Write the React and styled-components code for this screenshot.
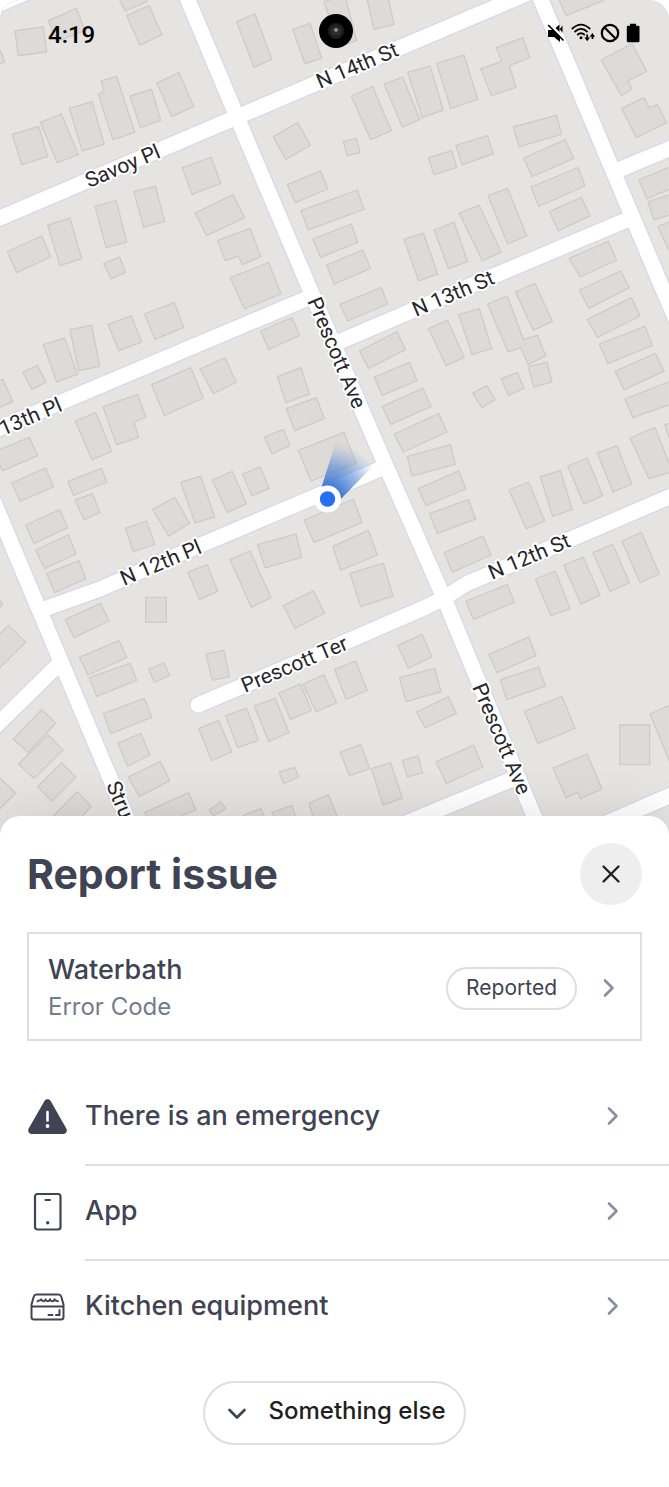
import React from "react";
import styled, { createGlobalStyle } from "styled-components";

const GlobalStyle = createGlobalStyle`
  *, *::before, *::after { box-sizing: border-box; }
  html, body { margin: 0; background: #fff; }
  body { font-family: Inter, "Liberation Sans", sans-serif; color: #404353; }
  button { font: inherit; color: inherit; cursor: pointer; }
`;

const Screen = styled.main`
  position: relative;
  display: flex;
  flex-direction: column;
  min-height: 100vh;
  background: #fff;
`;

const StatusBar = styled.header`
  position: absolute;
  inset: 0 0 auto;
  z-index: 1;
  display: grid;
  grid-template-columns: 1fr auto 1fr;
  align-items: center;
  padding: 13px 28px 0;
  font-family: Roboto, "Liberation Sans", sans-serif;
  color: #000;
`;

const Clock = styled.time`
  padding: 8px 0 0 20px;
  font-size: 24px;
  line-height: 28px;
  font-weight: 500;
`;

const Camera = styled.svg`
  width: 36px;
  height: 36px;
`;

const StatusIcons = styled.div`
  display: flex;
  justify-content: flex-end;
  align-items: center;
  gap: 5px;
  padding-top: 4px;
  svg { display: block; }
`;

const MapView = styled.section`
  overflow: hidden;
  border-radius: 20px 20px 0 0;
  background: #e5e4e0;
  svg { display: block; width: 100%; height: auto; }
`;

const StreetLabel = styled.text`
  font-family: Roboto, "Noto Sans", sans-serif;
  font-size: 21px;
  fill: #26262a;
  stroke: #fff;
  stroke-width: 4px;
  stroke-linejoin: round;
  paint-order: stroke;
`;

const Sheet = styled.section`
  position: relative;
  flex: 1;
  margin-top: -24px;
  padding: 27px 0 43px;
  border-radius: 20px 20px 0 0;
  background: #fff;
  box-shadow: 0 0 48px rgba(0, 0, 0, 0.12);
`;

const SheetHeader = styled.div`
  display: flex;
  align-items: center;
  justify-content: space-between;
  padding: 0 27px;
`;

const Title = styled.h1`
  margin: 0;
  font-size: 41px;
  line-height: 48px;
  font-weight: 700;
`;

const CloseButton = styled.button`
  display: grid;
  place-items: center;
  width: 62px;
  height: 62px;
  padding: 0;
  border: 0;
  border-radius: 50%;
  background: #eee;
  color: #1f1f1f;
`;

const ReportCard = styled.button`
  display: flex;
  align-items: center;
  width: calc(100% - 54px);
  margin: 27px 27px 30px;
  padding: 17px 24px 14px 19px;
  border: 2px solid #dedede;
  background: #fff;
  text-align: left;
`;

const ReportText = styled.span`
  flex: 1;
  display: flex;
  flex-direction: column;
`;

const ReportName = styled.span`
  font-size: 27px;
  line-height: 37px;
  font-weight: 500;
`;

const ReportDetail = styled.span`
  font-size: 24px;
  line-height: 37px;
  font-weight: 400;
  color: #727c8c;
`;

const StatusChip = styled.span`
  padding: 4px 18px 6px;
  margin-right: 25px;
  border: 2px solid #dedede;
  border-radius: 22px;
  font-size: 21px;
  line-height: 29px;
  font-weight: 400;
`;

const IssueList = styled.ul`
  margin: 0;
  padding: 0;
  list-style: none;
`;

const IssueButton = styled.button`
  display: flex;
  width: 100%;
  height: 95px;
  padding: 0 0 0 27px;
  border: 0;
  background: none;
  text-align: left;
`;

const IssueIcon = styled.span`
  display: flex;
  align-items: center;
  width: 58px;
  padding-bottom: 4px;
`;

const IssueLabel = styled.span`
  flex: 1;
  display: flex;
  align-items: center;
  justify-content: space-between;
  padding: 0 49px 4px 0;
  border-bottom: 2px solid ${(p) => (p.$last ? "transparent" : "#dedede")};
  font-size: 27px;
  font-weight: 500;
`;

const MoreButton = styled.button`
  display: flex;
  align-items: center;
  gap: 22px;
  height: 64px;
  margin: 25px auto 0;
  padding: 0 19px 6px 22px;
  border: 2px solid #dedede;
  border-radius: 32px;
  background: #fff;
  color: #1f1f1f;
  font-size: 24px;
  font-weight: 500;
  svg { margin-top: 8px; }
`;

/* Building footprints, grouped by map tile. Three tile units make one map unit. */
const tiles = [
  { x: 0, y: 0, shapes: [
    "45,92 130,81 140,156 55,167", "145,62 230,25 254,92 170,125", "-5,145 0,150 14,185 -5,195",
    "355,-8 442,-8 440,5 375,33", "380,47 447,17 486,104 420,135", "710,65 765,42 816,178 762,202",
    "878,88 930,70 965,174 915,192", "972,5 1035,-12 1070,122 1018,140", "37,403 116,380 143,470 65,494",
    "121,367 184,342 235,463 172,489", "208,325 276,305 313,433 247,453",
    "303,243 350,229 404,397 339,419 295,283 313,275", "390,288 455,268 482,361 421,383",
    "470,249 537,218 581,319 516,350", "820,410 893,368 931,436 857,478", "547,503 634,472 662,550 576,583",
    "862,554 962,513 983,567 886,608", "903,632 1072,570 1092,628 925,690", "938,717 1054,672 1073,727 962,772",
    "980,795 1088,750 1112,805 1002,852", "402,575 466,559 494,664 431,682", "585,639 699,584 734,653 620,707",
    "653,721 751,685 782,770 727,794 716,768 676,782", "691,833 806,788 843,882 733,926",
    "143,675 210,655 245,776 180,797", "285,619 349,602 380,726 318,743", "22,755 126,708 152,771 50,818",
    "311,791 359,771 377,818 333,836",
  ] },
  { x: 334, y: 0, shapes: [
    "98,-8 162,-8 180,73 120,88", "52,288 116,260 172,392 110,419", "150,252 206,231 258,358 205,381",
    "221,217 288,198 328,330 265,353", "308,190 390,165 431,298 350,325",
    "487,143 567,113 587,173 526,197 546,262 472,287 441,206 503,184", "28,425 67,415 78,458 40,467",
    "283,474 353,452 368,502 300,524", "366,436 460,407 478,462 384,494", "538,381 667,346 683,403 555,440",
    "569,474 694,419 719,475 595,530", "591,561 732,503 753,558 614,619", "646,635 742,592 768,648 673,692",
    "462,587 521,565 578,708 521,732", "376,640 435,615 502,757 445,782", "300,690 360,667 401,785 344,806",
    "210,718 268,699 311,822 254,843", "672,-8 820,-8 808,2 696,47",
    "802,180 894,130 938,214 882,243 894,268 862,287", "863,325 930,293 945,323 970,313 998,368 907,413",
    "915,540 1020,495 1045,552 938,596", "942,605 1020,580 1040,635 960,660", "972,680 1020,660 1030,735 1003,748",
    "705,775 823,724 848,780 738,831",
  ] },
  { x: 0, y: 270, shapes: [
    "69,307 112,286 138,337 95,359", "130,224 194,204 232,313 170,336", "210,179 275,166 299,289 236,302",
    "324,163 394,137 425,216 356,242", "433,132 523,98 551,172 465,208", "782,183 876,143 899,196 806,238",
    "-8,335 8,328 39,395 -8,415", "455,344 572,293 610,384 493,436", "600,297 675,264 708,337 640,371",
    "309,410 413,373 437,441 402,457 416,502 350,525", "226,453 287,428 335,544 276,569",
    "-8,542 88,502 113,557 8,602 -8,570", "35,639 137,594 161,650 61,694", "204,634 304,595 320,636 221,676",
    "225,690 277,671 300,727 252,749", "77,765 179,719 203,773 102,820", "376,775 440,753 464,823 400,844",
    "832,320 903,293 928,372 858,398", "859,416 949,383 973,446 884,482", "793,501 850,478 870,526 816,551",
    "895,541 1032,487 1068,580 933,633", "458,718 524,682 569,760 506,798", "542,637 602,618 644,741 585,759",
    "637,630 697,604 739,701 682,728", "728,612 780,591 808,655 755,677",
  ] },
  { x: 334, y: 270, shapes: [
    "736,60 860,3 886,53 765,115", "760,148 892,83 918,138 790,202", "796,222 933,169 955,226 822,281",
    "843,304 964,250 990,304 870,359", "873,387 1010,333 1030,395 897,443", "18,103 142,52 161,102 41,153",
    "76,243 189,185 215,238 104,295", "121,321 227,277 249,332 145,376", "145,409 267,355 291,410 170,463",
    "181,492 314,431 339,486 208,546", "220,560 349,524 364,583 234,618", "253,656 375,603 395,657 276,707",
    "286,731 403,689 425,747 310,790", "284,176 341,151 390,262 336,287", "374,134 436,116 473,236 414,253",
    "461,102 520,78 568,208 611,196 635,257 583,284 560,233 522,246", "544,66 603,40 655,154 598,181",
    "582,290 639,277 654,336 600,350", "502,326 550,308 570,355 523,376", "416,370 458,346 483,389 444,413",
    "525,660 584,636 632,753 577,777", "619,620 679,602 715,719 656,739", "702,588 760,564 806,677 749,702",
    "790,549 849,527 893,642 837,666", "888,504 963,472 1015,605 945,626", "992,465 1020,455 1020,510 1008,510",
    "-89,750 58,688 84,757 -60,818",
  ] },
  { x: 0, y: 540, shapes: [
    "-8,170 8,192 -8,210", "-8,288 26,256 77,307 -8,390", "40,598 125,508 167,550 85,637",
    "56,672 144,585 189,630 102,716", "113,740 185,668 228,711 156,783", "-8,706 47,760 -8,814",
    "155,833 231,755 273,799 230,850", "107,30 205,-15 228,42 134,86", "140,100 237,62 257,116 164,158",
    "196,238 302,190 327,243 222,293", "238,352 357,302 380,353 264,405", "268,413 390,370 410,421 290,469",
    "310,521 433,475 455,532 333,581", "354,610 422,580 450,645 382,678", "385,711 481,664 509,722 418,770",
    "434,818 566,758 588,810 460,860", "437,172 499,172 499,247 437,247", "446,387 492,369 509,406 463,427",
    "564,96 622,74 653,154 598,179", "690,59 750,33 813,173 754,202", "773,14 888,-18 905,52 795,84",
    "850,197 940,153 974,219 885,265", "618,342 672,331 688,410 637,421", "596,565 656,542 695,636 635,662",
    "677,527 740,505 776,601 713,623", "763,498 826,475 867,578 806,604", "837,459 901,432 934,511 872,539",
    "909,433 971,404 1010,488 948,515", "838,696 884,682 896,711 850,731", "628,810 661,786 677,805 640,828",
    "730,826 783,806 795,835 740,850", "816,817 876,796 888,835 830,850", "927,790 985,764 1020,850 945,850",
  ] },
  { x: 334, y: 540, shapes: [
    "331,38 447,-12 471,45 355,97", "396,183 520,134 541,187 418,238", "604,117 664,93 708,206 651,227",
    "689,75 748,52 798,166 741,192", "777,38 836,13 886,128 828,154", "864,3 922,-23 976,102 918,128",
    "-4,19 103,-29 130,45 20,90", "48,100 148,70 177,168 80,200", "191,317 264,283 294,351 223,384",
    "197,413 302,385 321,455 216,485", "248,516 343,470 367,520 273,563", "2,388 65,363 99,451 36,478",
    "465,343 584,291 606,347 489,398", "499,419 614,381 634,438 518,479", "571,514 684,469 723,565 612,611",
    "857,555 947,555 947,674 857,674", "948,522 1020,490 1020,690 1005,660",
    "657,684 759,642 804,747 740,776 731,757 696,773", "306,665 419,616 447,681 337,730",
    "205,661 252,648 266,698 220,711", "18,637 81,613 107,686 47,708", "112,686 170,668 205,775 147,795",
  ] },
];

const roads = [
  "M-20 12 30 -9", "M-2 -4 -6 11 -14 32",
  "M-20 227 0 218 237 117 512 0 559 -20",
  "M180 -20 188 0 237 117 306 280 382 457 444 598 534 816 545 842",
  "M533 -20 541 0 659 280 690 352",
  "M616 171 669 149 690 140",
  "M629 219 484 280 341 341",
  "M-20 437 0 428 308 298",
  "M-20 469 14 550 126 816 136 840",
  "M44 609 100 589 189 550 380 469",
  "M198 705 334 647 426 607 444 598 466 584 669 497 690 488",
  "M380 834 423 816 515 778",
  "M600 826 623 816 669 796 690 787",
  "M61 662 0 722 -20 742",
];

const streets = [
  { name: "Savoy Pl", x: 89, y: 188, angle: -23 },
  { name: "N 14th St", x: 320, y: 89, angle: -23 },
  { name: "N 13th St", x: 416, y: 317, angle: -23 },
  { name: "13th Pl", x: 3, y: 436, angle: -23 },
  { name: "N 12th Pl", x: 124, y: 586, angle: -23 },
  { name: "N 12th St", x: 492, y: 580, angle: -23 },
  { name: "Prescott Ter", x: 245, y: 693, angle: -23 },
  { name: "Prescott Ave", x: 307, y: 301, angle: 67 },
  { name: "Prescott Ave", x: 472, y: 687, angle: 67 },
  { name: "Stru", x: 106, y: 785, angle: 67 },
];

function StreetMap() {
  return (
    <svg viewBox="0 0 669 840" role="img" aria-label="Map of your current location">
      <defs>
        <radialGradient id="heading" gradientUnits="userSpaceOnUse" cx="328" cy="499" r="57">
          <stop offset="0.2" stopColor="#2f6fd0" stopOpacity="0.95" />
          <stop offset="0.6" stopColor="#4a80d2" stopOpacity="0.55" />
          <stop offset="1" stopColor="#6d9ae0" stopOpacity="0" />
        </radialGradient>
      </defs>
      <rect width="669" height="840" fill="#e5e4e0" />
      {tiles.map((tile) => (
        <g
          key={`${tile.x}-${tile.y}`}
          transform={`translate(${tile.x} ${tile.y}) scale(0.33333)`}
          fill="#dddad7"
          stroke="#cecbc8"
          strokeWidth="4"
        >
          {tile.shapes.map((points) => <polygon key={points} points={points} />)}
        </g>
      ))}
      <g fill="none" stroke="#d9d9ea" strokeWidth="18" strokeLinecap="round" strokeLinejoin="round">
        {roads.map((d) => <path key={d} d={d} />)}
      </g>
      <g fill="none" stroke="#fff" strokeWidth="15" strokeLinecap="round" strokeLinejoin="round">
        {roads.map((d) => <path key={d} d={d} />)}
      </g>
      {streets.map((s) => (
        <StreetLabel
          key={`${s.name}-${s.y}`}
          transform={`translate(${s.x} ${s.y}) rotate(${s.angle})`}
        >
          {s.name}
        </StreetLabel>
      ))}
      <path d="M320 492 337 438 376 463 338 502Z" fill="url(#heading)" />
      <circle cx="327.500" cy="499" r="13.500" fill="#fff" />
      <circle cx="327.500" cy="499" r="7.700" fill="#276ef1" />
    </svg>
  );
}

function Chevron({ down, color = "#8790a0" }) {
  return (
    <svg width={down ? 20 : 14} height={down ? 14 : 20} viewBox={down ? "0 0 20 14" : "0 0 14 20"} fill="none"
      stroke={color} strokeWidth="2.600" strokeLinecap="round" strokeLinejoin="round" aria-hidden="true">
      <path d={down ? "M2.500 3 10 10.500 17.500 3" : "M3 2.500 10.500 10 3 17.500"} />
    </svg>
  );
}

function WarningIcon() {
  return (
    <svg width="41" height="38" viewBox="0 0 41 38" aria-hidden="true">
      <path d="M17.300 3.200c1.500-2.500 5-2.500 6.500 0L39.300 30.500c1.400 2.800-.3 5.500-3.200 5.500H4.900c-2.900 0-4.600-2.700-3.200-5.500Z" fill="#404353" />
      <path d="M20.500 14v8.500" stroke="#fff" strokeWidth="2.600" strokeLinecap="round" />
      <circle cx="20.500" cy="28" r="1.900" fill="#fff" />
    </svg>
  );
}

function PhoneIcon() {
  return (
    <svg width="41" height="40" viewBox="0 0 41 40" fill="none" stroke="#404353" strokeWidth="2.200" strokeLinecap="round" aria-hidden="true">
      <rect x="8" y="2" width="25.500" height="35.500" rx="2.500" />
      <path d="M18.500 8h4.500" />
      <circle cx="20.700" cy="30.700" r="1.700" fill="#404353" stroke="none" />
    </svg>
  );
}

function KitchenIcon() {
  return (
    <svg width="41" height="30" viewBox="0 0 41 30" fill="none" stroke="#404353" strokeWidth="2" strokeLinecap="round" strokeLinejoin="round" aria-hidden="true">
      <path d="M4.500 15.500V12.500L6.800 4.500Q7.500 2.500 9.500 2.500H31.500Q33.500 2.500 34.200 4.500L36.500 12.500V25Q36.500 27.500 34 27.500H7Q4.500 27.500 4.500 25ZM4.500 14.500H36.500" />
      <path d="M10.500 9.300C12 8.500 13.300 8.500 14.300 7.300C15 9.800 18 9.800 18.600 7.300C19.500 9.800 22.500 9.800 23 7.300C24 9.800 27 9.800 27.400 7.300C28.500 9 29.500 9.200 31 9.300" strokeWidth="1.900" />
      <path d="M21.500 23h4M29 23h3.500v-5" />
    </svg>
  );
}

const issues = [
  { label: "There is an emergency", Icon: WarningIcon },
  { label: "App", Icon: PhoneIcon },
  { label: "Kitchen equipment", Icon: KitchenIcon },
];

function PhoneStatus() {
  return (
    <StatusBar>
      <Clock>4:19</Clock>
      <Camera viewBox="0 0 36 36" aria-hidden="true">
        <circle cx="19" cy="18" r="17" fill="#000" />
        <circle cx="19" cy="18" r="8" fill="#1b1f22" />
        <circle cx="19" cy="18" r="5" fill="#2b3033" />
        <circle cx="19" cy="17" r="1.700" fill="#a5a29c" />
      </Camera>
      <StatusIcons>
        <svg width="20" height="20" viewBox="0 0 20 20" role="img" aria-label="Muted">
          <path d="M2 7h4.500L14 14.200V19l-6-5H2ZM9.500 5 13.500 1.500V9ZM13.700 6.300 16.500 2.500V9.800Z" fill="#000" />
          <path d="M2.200 2 17.500 17.500" stroke="#000" strokeWidth="1.700" />
        </svg>
        <svg width="24" height="20" viewBox="0 0 24 20" fill="none" stroke="#000" strokeWidth="1.800" role="img" aria-label="Wi-Fi">
          <path d="M.8 6Q10 -2.800 19.200 6M3.500 9Q10 2.800 16.500 9M6.200 12Q10 8.600 13.800 12" />
          <circle cx="10" cy="14.800" r="1.500" fill="#000" stroke="none" />
          <path d="M16.200 11.500v5M21.500 16v-4" />
          <path d="M13.400 14.500h5.600l-2.800 3.700ZM18.700 13.800h5.300l-2.600-3.700Z" fill="#000" stroke="none" />
        </svg>
        <svg width="20" height="20" viewBox="0 0 20 20" fill="none" stroke="#000" strokeWidth="2.200" role="img" aria-label="Do not disturb">
          <circle cx="10" cy="10" r="8.200" />
          <path d="M4.300 4.300 15.700 15.700" />
        </svg>
        <svg width="16" height="20" viewBox="0 0 16 20" role="img" aria-label="Battery full">
          <path d="M5 .8h6v2h2.200Q14.500 2.800 14.500 4v14Q14.500 19.300 13.200 19.300H3Q1.800 19.300 1.800 18V4Q1.800 2.800 3 2.800h2Z" fill="#000" />
        </svg>
      </StatusIcons>
    </StatusBar>
  );
}

export default function App() {
  return (
    <Screen>
      <GlobalStyle />
      <PhoneStatus />
      <MapView>
        <StreetMap />
      </MapView>
      <Sheet aria-labelledby="sheet-title">
        <SheetHeader>
          <Title id="sheet-title">Report issue</Title>
          <CloseButton type="button" aria-label="Close">
            <svg width="20" height="20" viewBox="0 0 20 20" stroke="currentColor" strokeWidth="2.300" strokeLinecap="round" aria-hidden="true">
              <path d="M2.500 2.500 17.500 17.500M17.500 2.500 2.500 17.500" />
            </svg>
          </CloseButton>
        </SheetHeader>
        <ReportCard type="button">
          <ReportText>
            <ReportName>Waterbath</ReportName>
            <ReportDetail>Error Code</ReportDetail>
          </ReportText>
          <StatusChip>Reported</StatusChip>
          <Chevron />
        </ReportCard>
        <IssueList>
          {issues.map(({ label, Icon }, i) => (
            <li key={label}>
              <IssueButton type="button">
                <IssueIcon><Icon /></IssueIcon>
                <IssueLabel $last={i === issues.length - 1}>
                  {label}
                  <Chevron />
                </IssueLabel>
              </IssueButton>
            </li>
          ))}
        </IssueList>
        <MoreButton type="button">
          <Chevron down color="#404353" />
          Something else
        </MoreButton>
      </Sheet>
    </Screen>
  );
}
